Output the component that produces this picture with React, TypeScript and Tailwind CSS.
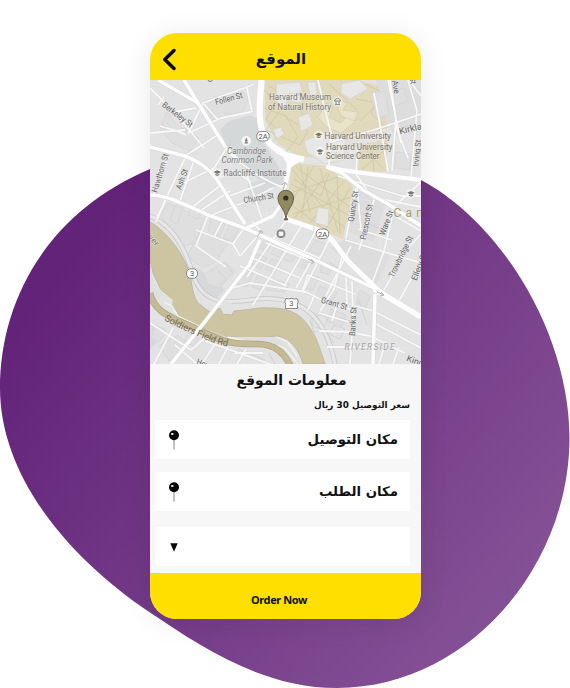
import React from 'react';

type Label = {
  t: string;
  x: number;
  y: number;
  len?: number;
  r?: number;
  size?: number;
  italic?: boolean;
  fill?: string;
};

const labels: Label[] = [
  { t: 'Follen St', x: 216, y: 105, len: 28, r: -15 },
  { t: 'Berkeley St', x: 161.5, y: 106, len: 36, r: 37 },
  { t: 'Harvard Museum', x: 269, y: 100.3, len: 62, fill: '#77746a' },
  { t: 'of Natural History', x: 268, y: 109.5, len: 63, fill: '#77746a' },
  { t: 'Harvard University', x: 324.5, y: 138.6, len: 66.5, fill: '#77705a' },
  { t: 'Harvard University', x: 326, y: 150, len: 66.5, fill: '#77705a' },
  { t: 'Science Center', x: 326, y: 159.3, len: 53.5, fill: '#77705a' },
  { t: 'Cambridge', x: 227, y: 153.7, len: 39, italic: true, fill: '#7c7c7c' },
  { t: 'Common Park', x: 221.5, y: 163, len: 51, italic: true, fill: '#7c7c7c' },
  { t: 'Radcliffe Institute', x: 223.5, y: 176, len: 63, fill: '#757575' },
  { t: 'Church St', x: 244, y: 203, len: 30.5, r: -9 },
  { t: 'Hawthorn St', x: 157, y: 193, len: 40, r: -73 },
  { t: 'Ash St', x: 181, y: 190, len: 21, r: -70 },
  { t: 'Quincy St', x: 353.5, y: 222, len: 31, r: -81 },
  { t: 'Prescott St', x: 365.5, y: 240, len: 36, r: -78 },
  { t: 'Ware St', x: 384.5, y: 236, len: 26, r: -69 },
  { t: 'Trowbridge St', x: 393.5, y: 278, len: 45, r: -64 },
  { t: 'Ellery St', x: 416.5, y: 281, len: 29, r: -69 },
  { t: 'Kirkland St', x: 400, y: 134.5, len: 44, r: -14, size: 9 },
  { t: 'Irving St', x: 418.5, y: 167, len: 27, r: -84 },
  { t: 'Ave', x: 392, y: 81, len: 13, r: 80 },
  { t: 'St', x: 409.5, y: 77.5, len: 7, r: 80 },
  { t: 'Grant St', x: 320.5, y: 302.5, len: 27, r: 16 },
  { t: 'Banks St', x: 355, y: 336, len: 29, r: -87 },
  { t: 'King St', x: 406, y: 360.5, len: 28, r: 20 },
  { t: 'Howard', x: 196, y: 364, len: 24, r: 20 },
  { t: 'River', x: 143, y: 231, len: 20, r: 52, fill: '#857c58' },
  { t: 'C', x: 208, y: 82.5, len: 6, r: -20 },
  { t: 'RIVERSIDE', x: 344.5, y: 349.5, len: 50, italic: true, fill: '#a3a3a3' },
  { t: 'Cambridge', x: 393.5, y: 216.8, len: 92, size: 12, fill: '#a89c74' },
];

const blocks: string[] = [
  '167,112 176,124 199,138 190,151 172,143 160,128',
  '206,106 215,99 243,92 248,100 243,111 212,120',
  '160,215 168,203 204,219 196,243 182,246',
  '175,205 183,208 177,224 170,220',
  '191,207 203,212 198,219 188,215',
  '200,232 229,241 216,262 203,268 187,256',
  '211,217 225,224 220,236 208,231',
  '230,224 239,229 233,241 223,238',
  '204,274 225,262 235,270 220,288 208,284',
  '265,239 274,242 267,252 260,248',
  '277,244 285,247 279,257 271,253',
  '288,248 298,252 292,262 282,259',
  '302,253 310,257 304,269 295,265',
  '257,254 267,258 261,269 251,264',
  '271,259 281,262 275,273 265,269',
  '245,270 254,272 247,287 237,284',
  '258,275 266,278 260,290 252,287',
  '270,279 290,284 284,292 266,290',
  '309,274 319,277 312,291 303,287',
  '323,262 333,266 329,275 320,272',
  '320,286 337,293 332,302 315,296',
  '331,309 346,315 342,326 327,321',
  '360,290 370,296 366,307 356,303',
  '315,240 326,244 320,255 309,251',
  '156,325 166,330 159,342 151,338',
  '159,346 178,335 188,344 169,361',
  '188,333 199,338 193,346 184,342',
  '391,92 404,88 407,101 395,106',
  '396,152 411,154 410,170 394,168',
  '371,93 385,91 389,115 377,118',
];

const campusBuildings: string[] = [
  '276,84 300,82 302,92 287,96 286,110 277,108',
  '289,93 303,96 301,103 289,101',
  '307,82 316,82 317,95 310,95',
  '341,84 359,80 368,89 350,99 341,93',
  '298,117 309,113 313,125 301,132',
  '304,141 326,132 346,139 344,160 325,164 307,152',
  '273,130 281,127 284,134 277,139',
  '346,145 357,143 358,153 348,158',
  '318,207.5 329,209 328,226 315,223',
];

const minorRoads: string[] = [
  'M150 88 L174 112 L196 108 M158 105 L164 97 M174 112 L191 132 L204 148',
  'M160 126 C170 130 174 128 186 135 M191 132 L221 118 L251 112',
  'M188 134 L203 103 L247 87 L254 84 M247 88 L252 112 M204 104 L218 120',
  'M150 133 L185 130 M185 156 L216 136 M211 173 L226 149 M186 156 L170 190 L157 218',
  'M168 157 L153 195 M167 197 L156 222 M193 163 L180 201 M179 185 L214 168',
  'M190 209 L222 184 M209 216 L245 202 L273 188 M197 213 L230 191',
  'M208 215 L196 246 L226 267 M223 220 L214 237 M196 230 L233 244 L244 228',
  'M219 178 L235 171 L251 182 M229 196 L265 183 M247 175 L262 219',
  'M233 244 L240 256 L260 233 M287 219 L247 277 M252 222 L260 230',
  'M302 225 L253 305 M329 240 L303 291 M316 231 L284 286',
  'M260 233 L319 258 M266 243 L311 261 M250 257 L300 278 M240 266 L287 286',
  'M226 290 L250 283 L306 292 L330 304 L358 311',
  'M310 263 L296 288 M342 257 L334 289 L320 311 M302 292 L308 275 L355 294',
  'M351 246 L326 296 M332 268 L372 285 M345 240 L421 263 M358 229 L392 240',
  'M356 188 L346 238 M375 197 L359 250 M395 205 L384 251 L371 286',
  'M421 234 L407 249 L384 290 M421 261 L399 301 M386 211 L421 231',
  'M357 187 L361 229 M371 197 L421 207',
  'M318 80 L323 102 L331 133 L329 166 M331 142 L374 130 L421 114',
  'M390 80 L396 119 L392 171 M408 80 L417 111 L411 178 M374 93 L381 130 L388 171',
  'M409 80 L421 96 M395 124 L408 158 M358 142 L356 174 L367 190',
  'M373 311 L421 335 M374 323 L421 348 M374 338 L405 353 M355 306 L374 311',
  'M352 281 L353 322 L350 364 M327 347 L371 347 M319 331 L350 332 L374 337',
  'M388 80 L401 143 M399 347 L393 364 M386 341 L379 364',
  'M319 313 L352 323 M308 310 L315 294 M337 304 L332 321 M346 276 L347 304',
  'M150 323 L176 340 L191 350 L206 337 M173 328 L154 364',
  'M175 345 L197 364 M205 341 L270 364 M215 344 L202 364 M228 347 L219 364 M246 349 L237 364',
  'M235 353 L263 353 M338 176 L402 196 L421 196 M397 204 L421 182',
];

const campusPaths: string[] = [
  'M264 90 L276 103 L266 119 L280 132 L270 146 M264 108 L286 116 L298 137 L285 153 M280 111 L266 130 L300 145 L308 131 L289 119 M300 110 L308 124 M269 86 L286 96',
  'M292 169 L329 215 L345 228 M300 164 L310 213 M314 166 L290 204 L327 231 M327 173 L294 219 M344 181 L310 223 M350 188 L325 230 M291 184 L350 216 M290 193 L344 175 M293 214 L352 197 M296 167 L350 207 M320 168 L338 232 M337 178 L340 234 M294 179 L321 196 L329 173 M308 167 L302 218',
  'M365 84 L380 91 L371 113 L383 125 M356 99 L378 103 L360 121 M329 84 L357 110 M364 147 L383 169 M386 149 L362 169 M372 145 L374 173',
];

const majorRoads: string[] = [
  'M158 80 L198 103',
  'M184 80 L198 103 L226 148 L241 163',
  'M150 147 L185 156 C199 162 207 167 216 178 L245 224',
  'M150 195 C166 195 182 203 208 215 L247 229 L290 249 L313 259 L382 292 L421 317',
  'M171 364 L203 324 L249 265 L260 240',
  'M247 228 L273 216 L283 202',
  'M327 167 L342 173 L363 190 L388 204 L421 226',
  'M375 294 L373 364',
];

function Badge({ x, y, text, w }: { x: number; y: number; text: string; w: number }) {
  return (
    <g>
      <rect x={x - w / 2} y={y - 4.8} width={w} height="9.6" rx="4.4" fill="#fbfbfb" stroke="#858585" strokeWidth="1" />
      <text x={x} y={y + 2.7} textAnchor="middle" fontSize="7.5" fill="#555">{text}</text>
    </g>
  );
}

function SchoolIcon({ x, y, color = '#777' }: { x: number; y: number; color?: string }) {
  return (
    <g transform={`translate(${x} ${y})`}>
      <circle r="4.8" fill="#f4f3ee" opacity=".85" />
      <path d="M-3.7 -.9 L0 -2.7 L3.7 -.9 L0 1 Z M-2 .8 V2 L0 3 L2 2 V.8 L0 1.8 Z" fill={color} />
    </g>
  );
}

function CityMap() {
  return (
    <svg className="block h-[284px] w-full shrink-0" viewBox="150 80 271 284" preserveAspectRatio="none" fontFamily="Roboto, 'Liberation Sans', sans-serif">
      <rect x="150" y="80" width="271" height="284" fill="#e3e3e3" />
      <path d="M220 130 L229 121 L250 115 L258 119 L260 136 L278 166 L286 184 L269 188 L244 168 L228 150 Z" fill="#d5d8d9" />
      <path d="M248 184 L263 179 L269 190 L259 205 L250 203 Z M187 264 L201 270 L225 290 L217 297 L198 290 Z M150 350 L165 333 L151 322 Z" fill="#d7dada" />
      <path d="M376 80 H421 V126 L392 132 L382 113 Z M345 239 L390 256 L375 287 L331 248 Z M357 188 L385 203 L374 242 L348 232 Z" fill="#dddddd" />

      <g fill="#e0d9bc">
        <path d="M265 80 H358 L378 86 L386 118 L388 128 L331 145 L326 158 L300 157 L278 144 L265 120 Z" />
        <path d="M292 163 L326 166 L353 185 L349 209 L343 239 L320 230 L288 217 L289 186 Z" />
        <path d="M360 145 L388 139 L386 172 L358 170 Z" />
      </g>
      <g fill="none" stroke="#c9bf98" strokeWidth=".8" opacity=".7">
        {campusPaths.map((d) => <path key={d} d={d} />)}
      </g>
      <g fill="#e7e7e5" stroke="#d2d1cb" strokeWidth=".7">
        {campusBuildings.map((p) => <polygon key={p} points={p} />)}
      </g>
      <g fill="#e9e3c9" stroke="#d3cba9" strokeWidth=".7">
        <polygon points="327,103 333,107 329,117 340,123 352,113 357,120 341,133 326,127 318,117" />
        <polygon points="334,98 347,103 343,110 358,112 355,121 341,116" />
      </g>

      <g fill="#dfdfdf" stroke="#d4d4d4" strokeWidth=".8">
        {blocks.map((p) => <polygon key={p} points={p} />)}
      </g>
      <g fill="none" stroke="#cecece" strokeWidth=".8">
        <path d="M220 285 L226 278 L218 271 M225 262 L234 275 M316 317 C325 310 331 321 323 328 C313 329 308 323 316 317 Z M334 325 L345 329 L340 339 L329 334 Z M341 318 L350 321 M365 222 L380 229 M357 216 L370 212 M329 262 L338 268" />
        <path d="M317 313 L310 321 L314 332 L324 331 M327 333 L334 343 M358 298 L367 325 M238 349 L265 360 M269 353 L275 364" />
      </g>

      <g fill="none" stroke="#cacaca" strokeLinejoin="round">
        <path d="M150 216 C174 225 187 253 194 278 C205 304 225 304 257 299 C291 296 324 306 335 364" strokeWidth="5" />
        <path d="M150 216 C174 225 187 253 194 278 C205 304 225 304 257 299 C291 296 324 306 335 364" stroke="#e7e7e7" strokeWidth="3.2" />
        {minorRoads.map((d) => <path key={d} d={d} strokeWidth="3" opacity=".3" />)}
      </g>
      <path d="M150 222 C164 229 180 250 185 262 C193 275 190 292 198 303 L211 313 L220 308 L223 314 L232 315 L234 311 C250 310 258 307 271 308 C289 308 301 314 309 327 C316 336 318 343 325 364 H303 C299 348 288 337 276 336 C256 339 229 338 215 334 L201 327 L181 318 L174 308 L168 303 L169 296 L161 290 L153 273 L150 260 Z" fill="#cdc5a2" stroke="#bdb8a1" strokeWidth="1" />
      <path d="M150 262 L154 283 L161 290 L164 306 L178 317 L203 328 L227 337 L263 337 L278 337 L292 350 L300 364 H289 L274 348 L240 343 L184 321 L158 307 L150 291 Z" fill="#dfdfde" />
      <path d="M160 298 L164 293 L173 300 L170 313 L160 307 Z M221 305 L224 300 L233 304 L232 313 L223 314 Z" fill="#e2e2e0" />
      <path d="M164 302 L172 306 L178 316 L203 328 M228 337 L254 343 L284 347 L298 364 M276 337 L287 341 L297 356" fill="none" stroke="#f5f4f1" strokeWidth="1.3" />
      <path d="M150 293 C154 313 173 318 199 330 C226 344 235 344 257 344 C276 344 285 354 291 367" fill="none" stroke="#ada47f" strokeWidth="6.6" />
      <path d="M150 293 C154 313 173 318 199 330 C226 344 235 344 257 344 C276 344 285 354 291 367" fill="none" stroke="#c4bb96" strokeWidth="5.2" />

      <g fill="none" stroke="#f8f8f8" strokeWidth="1.8" strokeLinejoin="round">
        {minorRoads.map((d) => <path key={d} d={d} />)}
      </g>
      <g fill="none" strokeLinejoin="round">
        <g stroke="#d5d5d5" strokeWidth="4.4">{majorRoads.map((d) => <path key={d} d={d} />)}</g>
        <g stroke="#fdfdfd" strokeWidth="3.6">{majorRoads.map((d) => <path key={d} d={d} />)}</g>
        <g stroke="#fdfdfd" strokeWidth="6">
          <path d="M261.5 80 C260 98 258 118 262 130 C268 145 278 153 292 157 L304 159.5" />
          <path d="M241 163 C258 177 271 183 282 187" strokeWidth="1.5" />
          <path d="M268 143 L282 151 L289 163 C289 177 283 185 284 195 L286 219" strokeWidth="4.2" />
          <path d="M289 165 L298 159" />
          <path d="M286 219 L322 231 C333 237 337 249 350 263 L380 292" strokeWidth="5" />
          <path d="M326 166.5 C350 173 383 175 421 180" strokeWidth="4" />
          <path d="M374 289 L421 317" strokeWidth="5.2" />
        </g>
      </g>
      <path d="M257 237 L261 231 M259 231 h3 v3 M308 259 L314 262 M311 259 l3 3 -3 2 M377 292 L384 295 M381 292 l3 3 -4 1 M283 190 L285 183 M282 185 l3 -3 2 3" fill="none" stroke="#b2b2b2" />

      <g fontSize="8.4" fill="#5f5f5f" stroke="#efefef" strokeWidth="1.1" strokeOpacity=".6" style={{ paintOrder: 'stroke' }}>
        {labels.map((l, i) => (
          <text
            key={i}
            x={l.x}
            y={l.y}
            textLength={l.len}
            lengthAdjust={l.size === 12 || l.t === 'RIVERSIDE' ? 'spacing' : 'spacingAndGlyphs'}
            transform={l.r ? `rotate(${l.r} ${l.x} ${l.y})` : undefined}
            fontSize={l.size}
            fontStyle={l.italic ? 'italic' : undefined}
            fill={l.fill}
          >
            {l.t}
          </text>
        ))}
      </g>
      <path id="field-road" d="M164 320 C178 328 195 335 207 340 C216 344 224 346.5 238 348" fill="none" />
      <text fontSize="9.4" fill="#6e6748" textLength="69">
        <textPath href="#field-road">Soldiers Field Rd</textPath>
      </text>

      <Badge x={263} y={136.2} text="2A" w={12.5} />
      <Badge x={322.5} y={233.8} text="2A" w={12.5} />
      <Badge x={192} y={273.5} text="3" w={11} />
      <path d="M286 298.5 Q288 299.8 291.5 298.2 Q295 299.8 297 298.5 L298.3 301 Q296.6 304 297.6 308.5 H285.4 Q286.4 304 284.7 301 Z" fill="#fbfbfb" stroke="#8a8a8a" strokeWidth="1" />
      <text x="291.5" y="306.3" textAnchor="middle" fontSize="7" fill="#555">3</text>

      <circle cx="246.3" cy="140.8" r="4.8" fill="#f7f7f7" />
      <path d="M246.3 137.6 L248 141 H247 L248.3 143.4 H244.3 L245.6 141 H244.6 Z" fill="#888" />
      <SchoolIcon x={318.7} y={135.3} color="#81784f" />
      <SchoolIcon x={320} y={151.7} />
      <SchoolIcon x={217.3} y={173} />
      <SchoolIcon x={411} y={193.7} />
      <circle cx="337.5" cy="101.5" r="5" fill="#eee" opacity=".8" />
      <path d="M334.5 100 L337.5 98 L340.5 100 V101 H334.5 Z M335 104.5 h5 M336 101 v3 M339 101 v3" fill="none" stroke="#777" strokeWidth=".8" />
      <circle cx="281" cy="233.7" r="4.9" fill="#858585" stroke="#eee" strokeWidth=".8" />
      <rect x="278.6" y="231.5" width="4.8" height="4.4" rx="1" fill="#f5f5f5" />

      <ellipse cx="286" cy="219.3" rx="2.3" ry="1.2" fill="#77736a" />
      <path d="M286 219.5 C285.2 209 278 205.8 278 198 A7.8 7.8 0 0 1 293.6 198 C293.6 205.8 286.8 209 286 219.5 Z" fill="#918961" stroke="#5b573e" strokeWidth=".9" />
      <circle cx="285.8" cy="198" r="2.6" fill="#35301d" />
    </svg>
  );
}

function PushPin() {
  return (
    <svg className="h-5 w-3 shrink-0" viewBox="0 0 12 20">
      <path d="M6 10 V19.5" stroke="#858585" strokeWidth="1" />
      <circle cx="6" cy="5.3" r="5" fill="#050505" />
      <ellipse cx="4.3" cy="3.9" rx="1.4" ry="1" fill="#ededed" />
    </svg>
  );
}

function PlaceRow({ children, className }: { children: React.ReactNode; className: string }) {
  return (
    <div dir="ltr" className={`flex h-[39px] items-center justify-between bg-white pr-3 pl-[12.5px] ${className}`}>
      <PushPin />
      <span dir="rtl" className="text-[13.3px] leading-none font-bold whitespace-nowrap">{children}</span>
    </div>
  );
}

export default function App() {
  return (
    <main className="relative h-[688px] w-[570px] overflow-hidden bg-white pt-[33px] pl-[150px]">
      <svg className="absolute inset-0 h-[688px] w-[570px]" viewBox="0 0 570 688">
        <defs>
          <linearGradient id="violet" gradientUnits="userSpaceOnUse" x1="70" y1="260" x2="500" y2="610">
            <stop offset="0" stopColor="#622379" />
            <stop offset="1" stopColor="#845095" />
          </linearGradient>
        </defs>
        <path d="M0 388 C0 300 48 212 150 169 C240 131 340 141 421 180 C502 223 569.5 335 569.5 438 C569.5 566 468 688 337 688 C262 688 200 646 150 612.5 C60 552 0 470 0 388 Z" fill="url(#violet)" />
      </svg>

      <section className="relative flex h-[586px] w-[271px] flex-col overflow-hidden rounded-[27px] bg-[#f7f7f7] font-['DejaVu_Sans',sans-serif] text-[#111] shadow-[0_3px_30px_rgba(0,0,0,0.09)]">
        <header className="flex h-[47px] shrink-0 items-center bg-[#ffdf00] pt-[5px] pl-[12px]">
          <svg className="h-[23px] w-[14px]" viewBox="0 0 14 23" fill="none">
            <path d="M12 2.5 L2.8 11.5 L12 20.5" stroke="#080808" strokeWidth="3.4" strokeLinecap="round" strokeLinejoin="round" />
          </svg>
          <h1 dir="rtl" className="ml-[79px] w-[52px] text-center text-[15px] leading-none font-bold whitespace-nowrap">الموقع</h1>
        </header>

        <CityMap />

        <div dir="rtl" className="flex h-[209px] shrink-0 flex-col pr-[11px] pl-[5px]">
          <h2 className="mt-[7px] h-[18px] pl-[18px] text-center text-[13.9px] leading-[18px] font-bold [direction:rtl]">معلومات الموقع</h2>
          <p className="mt-[9px] h-[14px] text-[8.9px] leading-[14px] font-bold">سعر التوصيل 30 ريال</p>
          <PlaceRow className="mt-[8px]">مكان التوصيل</PlaceRow>
          <PlaceRow className="mt-[13px]">مكان الطلب</PlaceRow>
          <div dir="ltr" className="mt-[16px] flex h-[39px] items-center bg-white pt-[2px] pl-[14.5px]">
            <svg className="h-[9px] w-[8px]" viewBox="0 0 8 9">
              <path d="M.3 .3 H7.7 L4 8.7 Z" fill="#080808" />
            </svg>
          </div>
        </div>

        <footer className="flex h-[46px] shrink-0 items-center bg-[#ffdf00] pt-[7px] pl-[101px] font-['Noto_Sans',sans-serif]">
          <button className="text-[11px] leading-none font-bold tracking-[-0.4px] whitespace-nowrap">Order Now</button>
        </footer>
      </section>
    </main>
  );
}
